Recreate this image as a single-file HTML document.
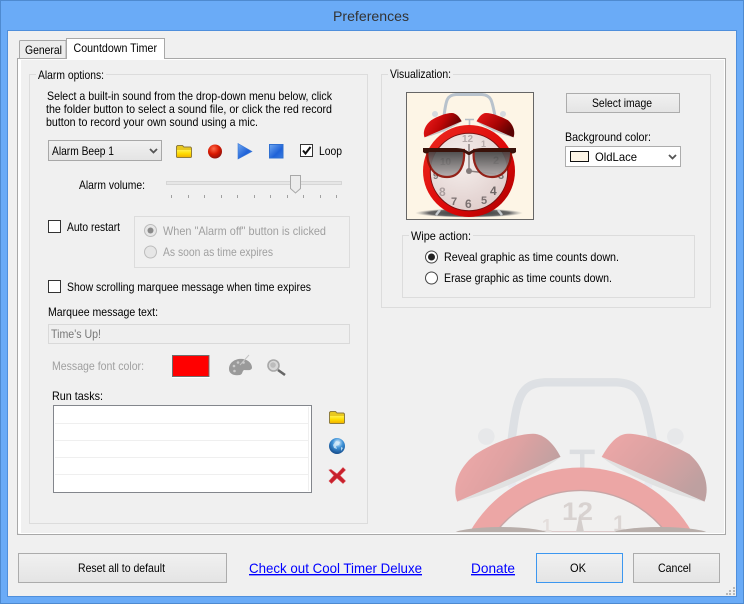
<!DOCTYPE html>
<html><head><meta charset="utf-8"><title>Preferences</title>
<style>
html,body{margin:0;padding:0;background:#6aabf7;width:744px;height:604px;overflow:hidden}
#w{position:absolute;left:0;top:0;width:744px;height:604px;overflow:hidden}
svg{display:block}
text{font-family:"Liberation Sans",sans-serif;font-size:12px;fill:#000}
.g{fill:#a0a0a0}
.l{fill:#0000ff;font-size:14px}
</style></head><body><div id="w">
<svg width="744" height="604" viewBox="0 0 744 604" xmlns="http://www.w3.org/2000/svg">
<defs>
<clipPath id="wm"><rect x="21" y="370" width="703" height="162"/></clipPath>
<linearGradient id="btn" x1="0" y1="0" x2="0" y2="1"><stop offset="0" stop-color="#f1f1f1"/><stop offset="1" stop-color="#e4e4e4"/></linearGradient>
<linearGradient id="fy" x1="0" y1="0" x2="0" y2="1"><stop offset="0" stop-color="#fff04a"/><stop offset=".5" stop-color="#ffdc00"/><stop offset="1" stop-color="#f2b400"/></linearGradient>
<radialGradient id="rec" cx=".4" cy=".3" r=".8"><stop offset="0" stop-color="#ff6a4a"/><stop offset=".5" stop-color="#d81800"/><stop offset="1" stop-color="#7a1010"/></radialGradient>
<linearGradient id="bl" x1="0" y1="0" x2="1" y2="1"><stop offset="0" stop-color="#70a8f0"/><stop offset=".6" stop-color="#1f62d8"/><stop offset="1" stop-color="#3a7ce0"/></linearGradient>
<radialGradient id="glo" cx=".55" cy=".3" r=".8"><stop offset="0" stop-color="#e8f6ff"/><stop offset=".4" stop-color="#3d92d8"/><stop offset="1" stop-color="#0b3a78"/></radialGradient>
<linearGradient id="bell" x1="0" y1="0" x2="1" y2=".4"><stop offset="0" stop-color="#f42020"/><stop offset=".55" stop-color="#c00606"/><stop offset="1" stop-color="#5a0202"/></linearGradient>
<linearGradient id="bell2" x1="0" y1="0" x2="1" y2=".6"><stop offset="0" stop-color="#ee1818"/><stop offset=".6" stop-color="#a80404"/><stop offset="1" stop-color="#5a0202"/></linearGradient>
<linearGradient id="ring" x1="0" y1="0" x2="1" y2="1"><stop offset="0" stop-color="#ee2a20"/><stop offset=".6" stop-color="#dc0808"/><stop offset="1" stop-color="#a80000"/></linearGradient>
<radialGradient id="face" cx=".4" cy=".35" r=".8"><stop offset="0" stop-color="#f6f0ee"/><stop offset="1" stop-color="#dcc8c6"/></radialGradient>
<linearGradient id="lens" x1="0" y1="0" x2="0" y2="1"><stop offset="0" stop-color="#3c3c3c"/><stop offset="1" stop-color="#b4aeae"/></linearGradient>
<radialGradient id="shadow"><stop offset="0" stop-color="#333"/><stop offset=".75" stop-color="#666"/><stop offset="1" stop-color="#999" stop-opacity="0"/></radialGradient>

<g id="top">
  <path d="M38 24C40 8 41 3 50 2.500H76C85 3 86 8 89 24" fill="none" stroke="#b8c2cc" stroke-width="3"/>
  <circle cx="29" cy="22" r="3" fill="#d5dadf"/><circle cx="97" cy="22" r="3" fill="#d5dadf"/>
  <path d="M36.500 35l2 5M89 35l-2 5" stroke="#dde" stroke-width="3"/>
  <path d="M18.500 45.400L55.700 29.300C50 34 34 42 18.500 45.400Z" fill="#c4c4c4"/>
  <path d="M18.500 45.400C16.500 40 19 33 25.200 28.300C31 24.500 40 21 45.800 21C50 21 53.500 25 55.700 29.300Z" fill="url(#bell)"/>
  <path d="M107.500 45.400L70.500 29.300C76 34 92 42 107.500 45.400Z" fill="#c4c4c4"/>
  <path d="M107.500 45.400C109.500 40 107.500 33 102 28.300C95 24.500 86 21 80 21C76 21 73 25 70.500 29.300Z" fill="url(#bell2)"/>
  <path d="M59 27.500H68M63.500 27.500V34" stroke="#b4bcc4" stroke-width="1.600" fill="none"/>
</g>
<g id="fld">
  <path d="M.5 12V1.500L1.500.5H6.500L8 2H14.500L15.500 3V12L14.500 12.500H1.500Z" fill="#e8c820" stroke="#8f7d3e" stroke-width="1"/>
  <path d="M1 5H15V11.500L14.500 12H1.500L1 11.500Z" fill="url(#fy)"/>
</g>
</defs>

<!-- window -->
<rect x="0" y="0" width="744" height="604" fill="#6aabf7"/>
<rect x=".5" y=".5" width="743" height="603" fill="none" stroke="#4e8ad0"/>
<rect x="7" y="30" width="730" height="567" fill="#4f8fdc"/>
<rect x="8" y="31" width="728" height="565" fill="#f0f0f0"/>
<text x="333" y="21" textLength="76" lengthAdjust="spacingAndGlyphs" style="font-size:14px;fill:#333">Preferences</text>

<!-- tab panel -->
<rect x="17.500" y="58.500" width="708" height="476" fill="#f0f0f0" stroke="#a8a8a8"/>

<!-- watermark -->
<g clip-path="url(#wm)">
<g transform="translate(405.700 375.400) scale(2.78)" opacity=".33">
  <use href="#top"/>
  <path d="M23 56.400A46 46 0 0 1 103 56.400Z" fill="#e41410"/>
  <path d="M32.400 56.400A38.700 38.700 0 0 1 93.600 56.400Z" fill="#f6f0ee" stroke="#7a1010" stroke-width=".5"/>
</g>
<text x="562" y="520" textLength="31" lengthAdjust="spacingAndGlyphs" style="font-size:25px;font-weight:bold;fill:#d8d2d0">12</text>
<text x="613" y="531" style="font-size:22px;font-weight:bold;fill:#dcd6d4">1</text>
<text x="542" y="532" style="font-size:18px;font-weight:bold;fill:#e4dedc">1</text>
<path d="M580 513L576 532H584Z" fill="#d4cecc"/>
<ellipse cx="501" cy="535" rx="49" ry="8" fill="#b8aeaa"/>
<ellipse cx="660" cy="535" rx="50" ry="8" fill="#b8aeaa"/>
</g>
<path d="M18.500 59.500H724.500V533M19.500 533.500H724.500" stroke="#fff" fill="none" stroke-width="1"/>
<path d="M19.500 59V533" stroke="#fff" stroke-width="3" fill="none"/>

<!-- tabs -->
<path d="M19.500 58V41.500C19.500 40.800 20 40.500 20.500 40.500H66V58" fill="#ececec" stroke="#a8a8a8"/>
<path d="M66.500 59V38.500H164.500V58.500" fill="#fff" stroke="#a8a8a8"/>
<rect x="67" y="57" width="97" height="3" fill="#fff"/>
<text x="25" y="54" textLength="37" lengthAdjust="spacingAndGlyphs">General</text>
<text x="73.500" y="52" textLength="83.500" lengthAdjust="spacingAndGlyphs">Countdown Timer</text>

<!-- Alarm group -->
<rect x="29.500" y="74.500" width="338" height="449" fill="none" stroke="#dcdcdc"/>
<rect x="36" y="70" width="70" height="10" fill="#f0f0f0"/>
<text x="38" y="79" textLength="66" lengthAdjust="spacingAndGlyphs">Alarm options:</text>
<text x="47" y="100" textLength="285" lengthAdjust="spacingAndGlyphs">Select a built-in sound from the drop-down menu below, click</text>
<text x="46" y="113" textLength="286" lengthAdjust="spacingAndGlyphs">the folder button to select a sound file, or click the red record</text>
<text x="46" y="126" textLength="212" lengthAdjust="spacingAndGlyphs">button to record your own sound using a mic.</text>

<rect x="48.500" y="140.500" width="113" height="20" fill="url(#btn)" stroke="#a8a8a8"/>
<text x="52" y="155" textLength="62" lengthAdjust="spacingAndGlyphs">Alarm Beep 1</text>
<path d="M150 149l3.500 3.500L157 149" fill="none" stroke="#555" stroke-width="1.800"/>
<use href="#fld" x="176" y="145"/>
<circle cx="215" cy="151.500" r="7" fill="url(#rec)"/>
<path d="M238 143.500L252 151.500L238 159Z" fill="url(#bl)" stroke="#3a78d8" stroke-width=".6"/>
<rect x="269.500" y="144.500" width="13.500" height="13.500" fill="url(#bl)" stroke="#2f6fd0"/>
<rect x="300.500" y="144.500" width="12" height="12" fill="#fff" stroke="#333"/>
<path d="M303 150.500l2.500 3L310.500 147" fill="none" stroke="#111" stroke-width="2"/>
<text x="319" y="155" textLength="23" lengthAdjust="spacingAndGlyphs">Loop</text>

<text x="79" y="189" textLength="66" lengthAdjust="spacingAndGlyphs">Alarm volume:</text>
<rect x="166.500" y="181.500" width="175" height="3" fill="#e6e6e6" stroke="#d6d6d6"/>
<path d="M290.500 175.500H300.500V188.500L295.500 193L290.500 188.500Z" fill="#ececec" stroke="#a8a8a8"/>
<path d="M171.500 195v3M188.500 195v3M204.500 195v3M221.500 195v3M237.500 195v3M254.500 195v3M270.500 195v3M287.500 195v3M303.500 195v3M320.500 195v3M336.500 195v3" stroke="#a0a0a0"/>

<!-- Auto restart -->
<rect x="48.500" y="220.500" width="12" height="12" fill="#fff" stroke="#333"/>
<text x="67" y="231" textLength="53" lengthAdjust="spacingAndGlyphs">Auto restart</text>
<rect x="134.500" y="216.500" width="215" height="51" fill="none" stroke="#dcdcdc"/>
<circle cx="150.500" cy="230.500" r="6" fill="#e6e6e6" stroke="#bcbcbc"/>
<circle cx="150.500" cy="230.500" r="3" fill="#8a8a8a"/>
<circle cx="150.500" cy="252" r="6" fill="#e6e6e6" stroke="#bcbcbc"/>
<text class="g" x="163" y="235" textLength="163" lengthAdjust="spacingAndGlyphs">When "Alarm off" button is clicked</text>
<text class="g" x="163" y="256" textLength="110" lengthAdjust="spacingAndGlyphs">As soon as time expires</text>

<rect x="48.500" y="280.500" width="12" height="12" fill="#fff" stroke="#333"/>
<text x="67" y="291" textLength="244" lengthAdjust="spacingAndGlyphs">Show scrolling marquee message when time expires</text>

<text x="48" y="316" textLength="110" lengthAdjust="spacingAndGlyphs">Marquee message text:</text>
<rect x="48.500" y="324.500" width="301" height="19" fill="#efefef" stroke="#d9d9d9"/>
<text x="51" y="338" textLength="50" lengthAdjust="spacingAndGlyphs" style="fill:#777">Time's Up!</text>

<text class="g" x="52" y="370" textLength="92" lengthAdjust="spacingAndGlyphs">Message font color:</text>
<rect x="172" y="355" width="38" height="23" fill="#fff"/>
<rect x="172.500" y="355.500" width="36.500" height="21" fill="#ff0000" stroke="#6e6e6e"/>

<!-- palette -->
<path d="M229 369C229 362 236 358 243 359C249 360 252 364 252 368C251 371 247 370 244 370C242 371 243 374 240 375C234 376 229 374 229 369Z" fill="#9a9a9a"/>
<path d="M240 365L249 355" stroke="#c4c4c4" stroke-width="1"/>
<circle cx="234" cy="366" r="1.300" fill="#ccc"/><circle cx="238" cy="362.500" r="1.300" fill="#ccc"/><circle cx="243.500" cy="362.500" r="1.300" fill="#ccc"/><circle cx="234.500" cy="371" r="1.300" fill="#ccc"/>
<!-- magnifier -->
<circle cx="273.500" cy="365.500" r="5.500" fill="#d8d8d8" stroke="#a8a8a8" stroke-width="1.600"/>
<circle cx="273" cy="365" r="2.800" fill="#bcbcbc"/>
<path d="M278 370L285 375" stroke="#666" stroke-width="2.600"/>

<!-- run tasks -->
<text x="52" y="400" textLength="51" lengthAdjust="spacingAndGlyphs">Run tasks:</text>
<rect x="53.500" y="405.500" width="258" height="87" fill="#fff" stroke="#83868c"/>
<path d="M55 423.500H308M55 440.500H308M55 457.500H308M55 474.500H308M308.500 407V491" stroke="#efefef"/>
<use href="#fld" x="329" y="411"/>
<circle cx="337" cy="446" r="8" fill="url(#glo)"/>
<path d="M336 441l4 1-1 3-3 1 1 3-3-1-1-3zM341 447l2 1-2 3z" fill="#d6ecfa" opacity=".8"/>
<path d="M331 469.500L337 474L343 467.500L345.500 470L340 475.500L345.500 481L343 483.500L337 478L331.500 483.500L329 481L334 475.500L329 470Z" fill="#c8202c" stroke="#d84a52" stroke-width=".6"/>

<!-- Visualization group -->
<rect x="381.500" y="74.500" width="329" height="233" fill="none" stroke="#dcdcdc"/>
<rect x="388" y="70" width="65" height="10" fill="#f0f0f0"/>
<text x="390" y="78" textLength="61" lengthAdjust="spacingAndGlyphs">Visualization:</text>

<rect x="406.500" y="92.500" width="127" height="127" fill="#fdf5e6" stroke="#666"/>
<g transform="translate(406 92)">
  <ellipse cx="63" cy="121" rx="54" ry="4.5" fill="url(#shadow)"/>
  <path d="M34 118l-4 5M92 118l4 5" stroke="#c8ccd0" stroke-width="2.5" fill="none"/>
  <use href="#top"/>
  <circle cx="63" cy="79" r="46" fill="url(#ring)"/>
  <circle cx="63" cy="80" r="38.700" fill="url(#face)" stroke="#7a1010" stroke-width="1"/>
  <text x="56" y="50" style="font-size:10px;font-weight:bold;fill:#b5aaaa">12</text>
  <text x="75" y="55" style="font-size:9px;font-weight:bold;fill:#b5aaaa">1</text>
  <text x="87" y="72" style="font-size:11px;font-weight:bold;fill:#555">2</text>
  <text x="92" y="87" style="font-size:11px;font-weight:bold;fill:#777">3</text>
  <text x="84" y="103" style="font-size:12px;font-weight:bold;fill:#6e6666">4</text>
  <text x="75" y="112" style="font-size:11px;font-weight:bold;fill:#7a7070">5</text>
  <text x="59" y="116" style="font-size:12px;font-weight:bold;fill:#7a7070">6</text>
  <text x="45" y="113" style="font-size:11px;font-weight:bold;fill:#7a7070">7</text>
  <text x="33" y="104" style="font-size:12px;font-weight:bold;fill:#aa9e9e">8</text>
  <text x="27" y="87" style="font-size:10px;font-weight:bold;fill:#777">9</text>
  <text x="34" y="73" style="font-size:10px;font-weight:bold;fill:#555">10</text>
  <path d="M63 79V52M63 79L90 82" stroke="#8a8080" stroke-width="1.500" fill="none"/>
  <circle cx="63" cy="79" r="3" fill="#827a7a"/>
  <path d="M21.500 58H58C59 71 55 85 41 85C27 85 20 72 21.500 58Z" fill="url(#lens)" opacity=".92" stroke="#8c1208" stroke-width="2.200"/>
  <path d="M68 58H105C106 72 99 85 86 85C72 85 66 71 68 58Z" fill="url(#lens)" opacity=".92" stroke="#8c1208" stroke-width="2.200"/>
  <path d="M17 56H50C56 56 60 58 63 60C66 58 70 56 76 56H110V60C108 62 105 62 104 60H70C67 60 65 63 63 63C61 63 59 60 56 60H23C22 62 19 62 17 60Z" fill="#3a120a"/>
</g>

<rect x="566.500" y="93.500" width="113" height="19" fill="url(#btn)" stroke="#acacac"/>
<text x="592" y="107" textLength="60" lengthAdjust="spacingAndGlyphs">Select image</text>
<text x="565" y="141" textLength="86" lengthAdjust="spacingAndGlyphs">Background color:</text>
<rect x="565.500" y="146.500" width="115" height="20" fill="#fff" stroke="#acacac"/>
<rect x="570.500" y="151.500" width="18" height="10" fill="#fdf5e6" stroke="#111"/>
<text x="595" y="161" textLength="42" lengthAdjust="spacingAndGlyphs">OldLace</text>
<path d="M669 155l3.500 3.500L676 155" fill="none" stroke="#555" stroke-width="1.800"/>

<rect x="402.500" y="235.500" width="292" height="62" fill="none" stroke="#dcdcdc"/>
<rect x="409" y="231" width="64" height="10" fill="#f0f0f0"/>
<text x="411" y="240" textLength="60" lengthAdjust="spacingAndGlyphs">Wipe action:</text>
<circle cx="431.500" cy="257" r="6" fill="#fff" stroke="#444"/>
<circle cx="431.500" cy="257" r="3.500" fill="#222"/>
<circle cx="431.500" cy="278" r="6" fill="#fff" stroke="#444"/>
<text x="444" y="261" textLength="175" lengthAdjust="spacingAndGlyphs">Reveal graphic as time counts down.</text>
<text x="444" y="282" textLength="168" lengthAdjust="spacingAndGlyphs">Erase graphic as time counts down.</text>

<!-- bottom -->
<rect x="18.500" y="553.500" width="208" height="29" fill="url(#btn)" stroke="#acacac"/>
<text x="78" y="572" textLength="87" lengthAdjust="spacingAndGlyphs">Reset all to default</text>
<text class="l" x="249" y="573" textLength="173" lengthAdjust="spacingAndGlyphs" text-decoration="underline">Check out Cool Timer Deluxe</text>
<text class="l" x="471" y="573" textLength="44" lengthAdjust="spacingAndGlyphs" text-decoration="underline">Donate</text>
<rect x="536.500" y="553.500" width="86" height="29" fill="url(#btn)" stroke="#3c97f0"/>
<text x="570" y="572" textLength="16" lengthAdjust="spacingAndGlyphs">OK</text>
<rect x="633.500" y="553.500" width="86" height="29" fill="url(#btn)" stroke="#acacac"/>
<text x="658" y="572" textLength="33" lengthAdjust="spacingAndGlyphs">Cancel</text>
<path d="M733 587h2v2h-2zM729 590h2v2h-2zM733 590h2v2h-2zM726 593h2v2h-2zM729 593h2v2h-2zM733 593h2v2h-2z" fill="#b8b8b8"/>
</svg>
</div></body></html>
